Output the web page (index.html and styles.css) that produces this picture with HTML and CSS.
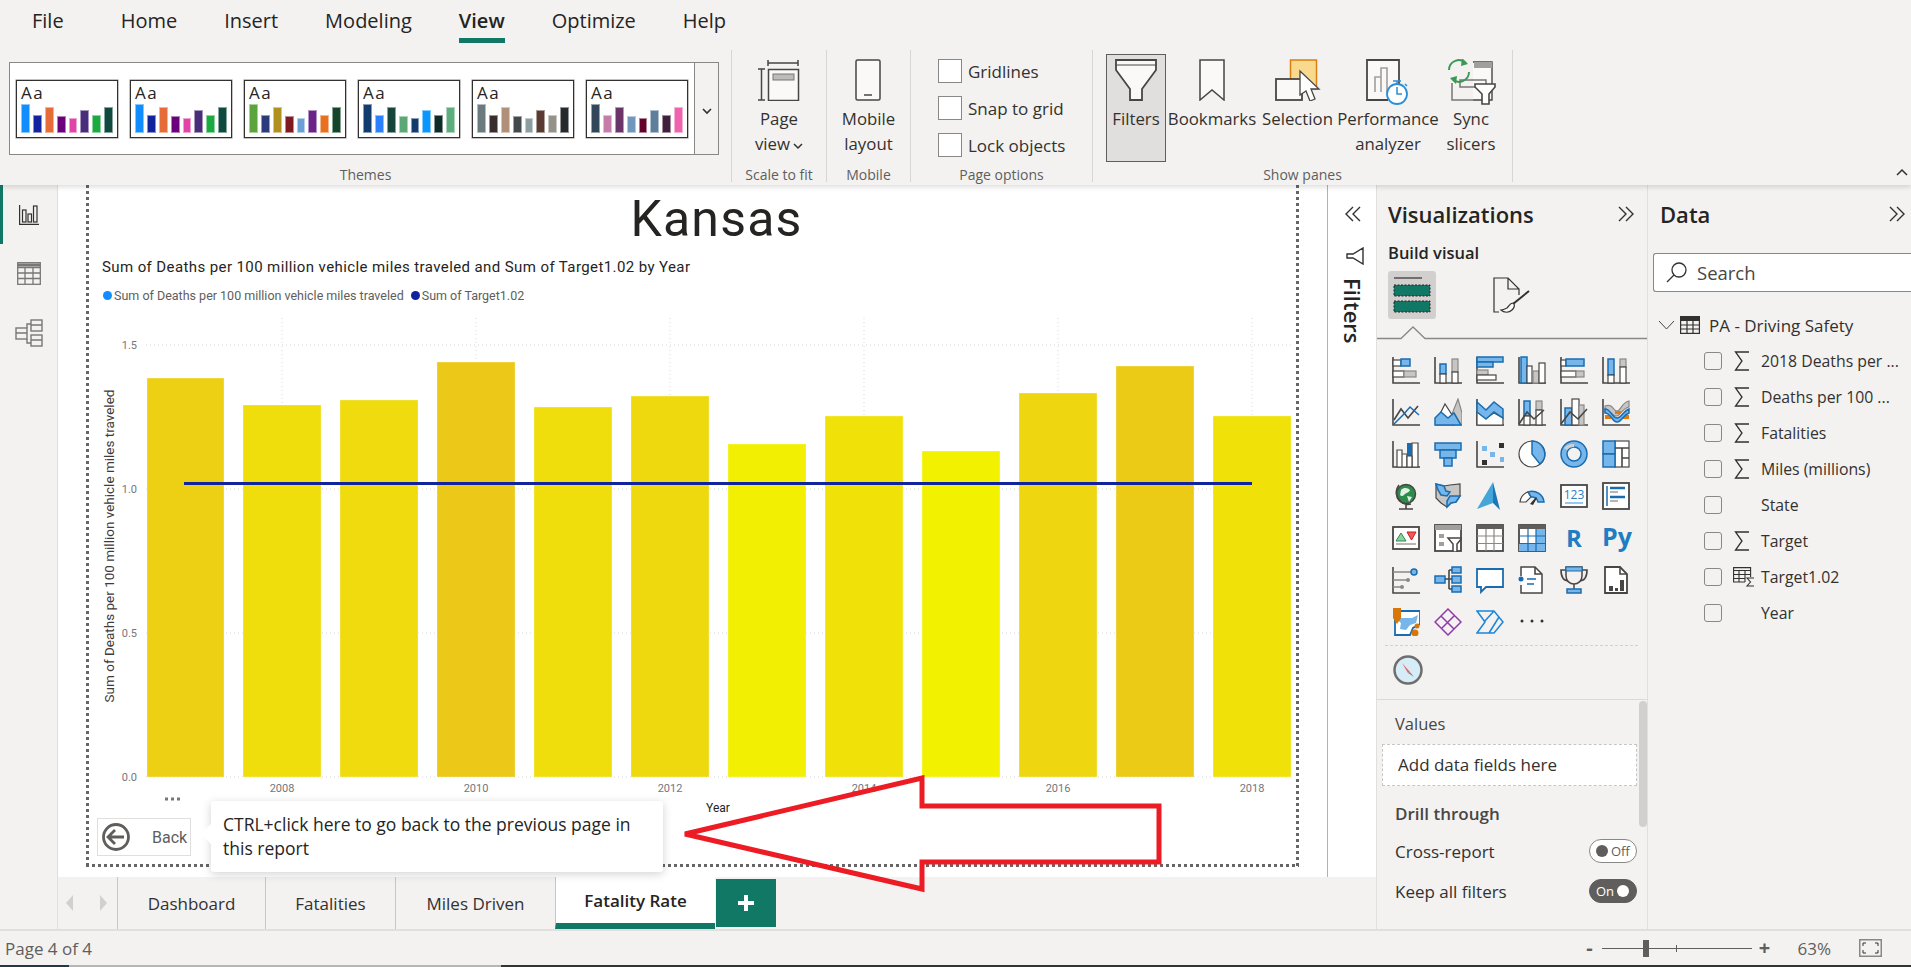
FILE: index.html
```html
<!DOCTYPE html>
<html lang="en">
<head>
    <meta charset="UTF-8">
    <title>Kansas - Power BI Desktop</title>
    <link rel="stylesheet" href="styles.css">
</head>
<body>
<div class="app">

    <!-- ribbon -->
    <header class="ribbon">
        <nav class="menu">
            <span class="menu-file">File</span>
            <span>Home</span>
            <span>Insert</span>
            <span>Modeling</span>
            <span class="menu-on">View</span>
            <span>Optimize</span>
            <span>Help</span>
        </nav>
        <div class="groups">
            <section class="group g-themes">
                <div class="group-body">
                    <div class="gallery">
                        <div class="swatches">
                            <div class="swatch t1"><span>Aa</span><div class="mini"><i></i><i></i><i></i><i></i><i></i><i></i><i></i><i></i></div></div>
                            <div class="swatch t1"><span>Aa</span><div class="mini"><i></i><i></i><i></i><i></i><i></i><i></i><i></i><i></i></div></div>
                            <div class="swatch t3"><span>Aa</span><div class="mini"><i></i><i></i><i></i><i></i><i></i><i></i><i></i><i></i></div></div>
                            <div class="swatch t4"><span>Aa</span><div class="mini"><i></i><i></i><i></i><i></i><i></i><i></i><i></i><i></i></div></div>
                            <div class="swatch t5"><span>Aa</span><div class="mini"><i></i><i></i><i></i><i></i><i></i><i></i><i></i><i></i></div></div>
                            <div class="swatch t6"><span>Aa</span><div class="mini"><i></i><i></i><i></i><i></i><i></i><i></i><i></i><i></i></div></div>
                        </div>
                        <div class="gallery-more">
                            <svg width="10" height="7" viewBox="0 0 10 7"><path d="M1 1l4 4 4-4" fill="none" stroke="#323130" stroke-width="1.600"/></svg>
                        </div>
                    </div>
                </div>
                <div class="group-label">Themes</div>
            </section>

            <section class="group g-scale">
                <div class="group-body center">
                    <div class="big">
                        <svg width="43" height="42" viewBox="0 0 43 42">
                            <path d="M11 1v6M41 1v6M11 4h30M1 10h7M1 41h7M4.500 10v31" fill="none" stroke="#484644" stroke-width="1.500"/>
                            <rect x="11.500" y="10.500" width="30" height="31" fill="#faf9f8" stroke="#484644" stroke-width="1.500"/>
                            <rect x="16" y="15" width="21" height="6" fill="#bebbb8" stroke="#797775"/>
                        </svg>
                        <div class="big-text">Page<br>view<svg class="caret" width="10" height="7" viewBox="0 0 10 7"><path d="M1 1l4 4 4-4" fill="none" stroke="#323130" stroke-width="1.500"/></svg></div>
                    </div>
                </div>
                <div class="group-label">Scale to fit</div>
            </section>

            <section class="group g-mobile">
                <div class="group-body center">
                    <div class="big">
                        <svg width="26" height="42" viewBox="0 0 26 42">
                            <rect x="1" y="1" width="24" height="40" rx="1.500" fill="#faf9f8" stroke="#484644" stroke-width="1.500"/>
                            <path d="M9 36h8" stroke="#484644" stroke-width="1.500"/>
                        </svg>
                        <div class="big-text">Mobile<br>layout</div>
                    </div>
                </div>
                <div class="group-label">Mobile</div>
            </section>

            <section class="group g-options">
                <div class="group-body checks">
                    <label class="check"><i></i>Gridlines</label>
                    <label class="check"><i></i>Snap to grid</label>
                    <label class="check"><i></i>Lock objects</label>
                </div>
                <div class="group-label">Page options</div>
            </section>

            <section class="group g-panes">
                <div class="group-body panes-row">
                    <div class="big big-filters">
                        <svg width="42" height="42" viewBox="0 0 42 42">
                            <path d="M1 1h40v10L27 30v11H15V30L1 11z" fill="#faf9f8" stroke="#484644" stroke-width="1.800"/>
                            <path d="M1 6h40" stroke="#484644" stroke-width="1"/>
                        </svg>
                        <div class="big-text">Filters</div>
                    </div>
                    <div class="big big-bookmarks">
                        <svg width="26" height="42" viewBox="0 0 26 42">
                            <path d="M1 1h24v40L13 31 1 41z" fill="#faf9f8" stroke="#484644" stroke-width="1.500"/>
                        </svg>
                        <div class="big-text">Bookmarks</div>
                    </div>
                    <div class="big big-selection">
                        <svg width="46" height="42" viewBox="0 0 46 42">
                            <rect x="15.500" y="1" width="26" height="29" fill="#f9d98d" stroke="#d9800f" stroke-width="1.500"/>
                            <rect x="1" y="20" width="26" height="21" fill="#faf9f8" stroke="#484644" stroke-width="1.800"/>
                            <path d="M25 12v24l6-4 4 10 5-2-4-10h8z" fill="#fff" stroke="#484644" stroke-width="1.300"/>
                        </svg>
                        <div class="big-text">Selection</div>
                    </div>
                    <div class="big big-perf">
                        <svg width="44" height="46" viewBox="0 0 44 46">
                            <path d="M33 27V1H1v40h21" fill="#faf9f8" stroke="#484644" stroke-width="1.800"/>
                            <path d="M9 33V18h6v15M15 33V9h6v24" fill="none" stroke="#a19f9d" stroke-width="1.600"/>
                            <circle cx="31" cy="35" r="10" fill="#fff" stroke="#2a8fd6" stroke-width="1.800"/>
                            <path d="M31 28v7h5M27 22h8M31 22v3M39 25l2 2" fill="none" stroke="#2a8fd6" stroke-width="1.500"/>
                        </svg>
                        <div class="big-text">Performance<br>analyzer</div>
                    </div>
                    <div class="big big-sync">
                        <svg width="49" height="46" viewBox="0 0 49 46">
                            <path d="M26 3h19v38H26" fill="#faf9f8" stroke="#484644" stroke-width="1.400"/>
                            <rect x="27" y="3" width="18" height="6" fill="#a19f9d"/>
                            <path d="M13 21h26v7H13zM5 24v17h22" fill="none" stroke="#797775" stroke-width="1.500"/>
                            <path d="M28 25h20v3l-6 7v10h-7V35l-7-7z" fill="#fff" stroke="#484644" stroke-width="1.600"/>
                            <path d="M2 11a10 10 0 0 1 17-7M22 13a10 10 0 0 1-17 7" fill="none" stroke="#3a9a55" stroke-width="1.900"/>
                            <path d="M15 -1l6 6-7 2zM9 25l-6-6 7-2z" fill="#3a9a55"/>
                        </svg>
                        <div class="big-text">Sync<br>slicers</div>
                    </div>
                </div>
                <div class="group-label">Show panes</div>
            </section>
        </div>
        <svg class="ribbon-collapse" width="12" height="8" viewBox="0 0 12 8"><path d="M1 7l5-5 5 5" fill="none" stroke="#323130" stroke-width="1.500"/></svg>
    </header>

    <div class="main">
        <!-- left nav -->
        <aside class="side">
            <div class="side-item side-on">
                <svg width="20" height="20" viewBox="0 0 20 20" fill="none" stroke="#323130" stroke-width="1.200"><path d="M.6 0v19.400H20"/><rect x="3.500" y="5" width="3.500" height="12"/><rect x="9" y="9" width="3.500" height="8"/><rect x="14.500" y="1" width="3.500" height="16"/></svg>
            </div>
            <div class="side-item">
                <svg width="24" height="23" viewBox="0 0 24 23" fill="none" stroke="#797775" stroke-width="1.300"><rect x=".7" y=".7" width="22.600" height="21.600"/><path d="M.7 5.500h22.600M.7 11h22.600M.7 16.500h22.600M8 5.500v16.800M16 5.500v16.800"/><path d="M.7 3h22.600" stroke-width="3"/></svg>
            </div>
            <div class="side-item">
                <svg width="28" height="28" viewBox="0 0 28 28" fill="none" stroke="#797775" stroke-width="1.400"><rect x="1" y="9" width="11" height="11"/><rect x="16" y="1" width="11" height="11"/><rect x="16" y="16" width="11" height="11"/><path d="M1 14h11M16 6h11M16 21h11M12 9V5h4M12 20v4h4"/></svg>
            </div>
        </aside>

        <div class="center-col">
            <div class="stage">
                <!-- report page -->
                <div class="canvas">
                    <div class="report">
                        <h1 class="page-title">Kansas</h1>
                        <div class="chart-title">Sum of Deaths per 100 million vehicle miles traveled and Sum of Target1.02 by Year</div>
                        <div class="legend">
                            <i class="dot dot-a"></i><span>Sum of Deaths per 100 million vehicle miles traveled</span>
                            <i class="dot dot-b"></i><span>Sum of Target1.02</span>
                        </div>
                        <svg class="chart" width="1211" height="505" viewBox="0 0 1211 505">
                            <g class="grid">
                                <path d="M60 35H1205M60 179H1205M60 323H1205M60 467H1205"/>
                                <path d="M196 8V467M390 8V467M584 8V467M778 8V467M972 8V467M1166 8V467"/>
                            </g>
                            <g class="ticks">
                                <text x="51" y="39">1.5</text>
                                <text x="51" y="183">1.0</text>
                                <text x="51" y="327">0.5</text>
                                <text x="51" y="471">0.0</text>
                            </g>
                            <g class="bars">
                                <rect x="61" y="68" width="77" height="399" fill="#edd014"/>
                                <rect x="157" y="95" width="78" height="372" fill="#efdd0c"/>
                                <rect x="254" y="90" width="78" height="377" fill="#efdb0e"/>
                                <rect x="351" y="52" width="78" height="415" fill="#ecc918"/>
                                <rect x="448" y="97" width="78" height="370" fill="#efde0c"/>
                                <rect x="545" y="86" width="78" height="381" fill="#eed90f"/>
                                <rect x="642" y="134" width="78" height="333" fill="#f2ef02"/>
                                <rect x="739" y="106" width="78" height="361" fill="#f0e209"/>
                                <rect x="836" y="141" width="78" height="326" fill="#f2f200"/>
                                <rect x="933" y="83" width="78" height="384" fill="#eed710"/>
                                <rect x="1030" y="56" width="78" height="411" fill="#eccb17"/>
                                <rect x="1127" y="106" width="78" height="361" fill="#f0e209"/>
                            </g>
                            <path d="M98 173.500H1166" stroke="#12239e" stroke-width="3"/>
                            <g class="ticks ticks-x">
                                <text x="196" y="482">2008</text>
                                <text x="390" y="482">2010</text>
                                <text x="584" y="482">2012</text>
                                <text x="778" y="482">2014</text>
                                <text x="972" y="482">2016</text>
                                <text x="1166" y="482">2018</text>
                            </g>
                            <text class="axis-x" x="632" y="502">Year</text>
                            <text class="axis-y" transform="translate(28 236) rotate(-90)">Sum of Deaths per 100 million vehicle miles traveled</text>
                            <path d="M79 489h3M85 489h3M91 489h3" stroke="#797775" stroke-width="3"/>
                        </svg>
                        <div class="back">
                            <svg width="28" height="28" viewBox="0 0 28 28" fill="none" stroke="#605e5c" stroke-width="2.800"><circle cx="14" cy="14" r="12.500"/><path d="M22 14H6M13 7l-7 7 7 7"/></svg>
                            <span>Back</span>
                        </div>
                        <div class="tip">CTRL+click here to go back to the previous page in this report</div>
                        <svg class="arrow" width="490" height="125" viewBox="0 0 490 125">
                            <path d="M3 59L240 3V31H477V87H240V114z" fill="none" stroke="#ed1c24" stroke-width="5"/>
                        </svg>
                    </div>
                </div>
                <!-- collapsed filter pane -->
                <div class="filter-strip">
                    <svg width="18" height="16" viewBox="0 0 18 16" fill="none" stroke="#323130" stroke-width="1.400"><path d="M9 1L2 8l7 7M16 1L9 8l7 7"/></svg>
                    <svg class="strip-funnel" width="18" height="18" viewBox="0 0 18 18" fill="none" stroke="#323130" stroke-width="1.400"><path d="M17 1v16L7 11H1V7h6z"/></svg>
                    <div class="strip-text">Filters</div>
                </div>
            </div>
            <!-- page tabs -->
            <div class="tabs">
                <div class="tab-nav">
                    <svg width="8" height="16" viewBox="0 0 8 16"><path d="M7 0v16L0 8z" fill="#d2d0ce"/></svg>
                    <svg width="8" height="16" viewBox="0 0 8 16"><path d="M1 0v16l7-8z" fill="#d2d0ce"/></svg>
                </div>
                <div class="tab tab-a">Dashboard</div>
                <div class="tab tab-b">Fatalities</div>
                <div class="tab tab-c">Miles Driven</div>
                <div class="tab tab-d tab-on">Fatality Rate</div>
                <div class="tab-add">
                    <svg width="18" height="18" viewBox="0 0 18 18"><path d="M9 1v16M1 9h16" stroke="#fff" stroke-width="4"/></svg>
                </div>
            </div>
        </div>

        <!-- visualizations pane -->
        <aside class="pane viz">
            <div class="pane-head">
                <h2>Visualizations</h2>
                <svg width="18" height="16" viewBox="0 0 18 16" fill="none" stroke="#323130" stroke-width="1.400"><path d="M2 1l7 7-7 7M9 1l7 7-7 7"/></svg>
            </div>
            <div class="viz-sub">Build visual</div>
            <div class="viz-tabs">
                <div class="viz-tab-on">
                    <svg width="38" height="38" viewBox="0 0 38 38">
                        <path d="M1 2h28" stroke="#323130" stroke-width="1.200"/>
                        <rect x="1" y="9" width="36" height="11" fill="#117865" stroke="#252423" stroke-dasharray="2 1.500"/>
                        <rect x="1" y="25" width="36" height="11" fill="#117865" stroke="#252423" stroke-dasharray="2 1.500"/>
                    </svg>
                </div>
                <svg class="viz-format" width="37" height="37" viewBox="0 0 37 37" fill="none" stroke="#323130" stroke-width="1.200">
                    <path d="M6 35H1V1h14l11 11v6M15 1v11h11"/>
                    <path d="M36 14L20 27" stroke-width="2"/>
                    <path d="M20 26c-3 0-4 3-6 5-2 1-4 2-6 2 3 3 8 3 11 0 2-2 3-4 2-6z" fill="#faf9f8"/>
                </svg>
            </div>
            <svg class="viz-notch" width="270" height="14" viewBox="0 0 270 14"><path d="M0 12.500H24L36 1l12 11.500H270" fill="none" stroke="#8a8886" stroke-width="1.300"/></svg>

            <div class="viz-grid">
                <svg viewBox="0 0 28 28"><path class="k" d="M1 1V27H28"/><rect class="w" x="1" y="4" width="8" height="6"/><rect class="b" x="9" y="3" width="9" height="7"/><rect class="w" x="1" y="15" width="11" height="6"/><rect class="g" x="12" y="15" width="12" height="6"/></svg>
                <svg viewBox="0 0 28 28"><path class="k" d="M1 1V27H28"/><rect class="b" x="6" y="8" width="6" height="10"/><rect class="w" x="6" y="18" width="6" height="9"/><rect class="g" x="18" y="3" width="6" height="13"/><rect class="w" x="18" y="16" width="6" height="11"/></svg>
                <svg viewBox="0 0 28 28"><path class="k" d="M1 1V27H28"/><rect class="b" x="1" y="1" width="26" height="5"/><rect class="b" x="1" y="6" width="16" height="5"/><rect class="g" x="1" y="14" width="11" height="5"/><rect class="w" x="1" y="19" width="19" height="5"/></svg>
                <svg viewBox="0 0 28 28"><path class="k" d="M1 1V27H28"/><rect class="b" x="3" y="1" width="6" height="26"/><rect class="w" x="9" y="10" width="5" height="17"/><rect class="g" x="15" y="15" width="6" height="12"/><rect class="w" x="21" y="7" width="6" height="20"/></svg>
                <svg viewBox="0 0 28 28"><path class="k" d="M1 1V27H28"/><rect class="w" x="1" y="4" width="5" height="6"/><rect class="b" x="6" y="3" width="18" height="7"/><rect class="w" x="1" y="15" width="15" height="6"/><rect class="g" x="16" y="15" width="8" height="6"/></svg>
                <svg viewBox="0 0 28 28"><path class="k" d="M1 1V27H28"/><rect class="b" x="6" y="3" width="6" height="16"/><rect class="w" x="6" y="19" width="6" height="8"/><rect class="g" x="18" y="3" width="6" height="8"/><rect class="w" x="18" y="11" width="6" height="16"/></svg>

                <svg viewBox="0 0 28 28"><path class="k" d="M1 1V27H28"/><path class="k" d="M2 22L9 11l7 9 10-12"/><path class="s" d="M2 26L11 17l7-8 9 8"/></svg>
                <svg viewBox="0 0 28 28"><path class="g" d="M18 16L24 1l4 14V27H18z"/><path class="w" d="M2 24L11 6l9 14v7H2z"/><path class="b" d="M1 27V20l6-6 7 6 6-5 7 12z"/></svg>
                <svg viewBox="0 0 28 28"><path class="k" d="M1 1V27H28"/><path class="w" d="M1 14l9 6 8-5 9 5v7H1z"/><path class="b" d="M1 4l9 8 8-8 9 7v9l-9-6-8 7-9-7z"/></svg>
                <svg viewBox="0 0 28 28"><path class="k" d="M1 1V27H28"/><rect class="b" x="6" y="3" width="6" height="15"/><rect class="w" x="6" y="18" width="6" height="9"/><rect class="g" x="18" y="3" width="6" height="9"/><rect class="w" x="18" y="12" width="6" height="15"/><path class="k" d="M1 26L9 14l7 7 10-9"/></svg>
                <svg viewBox="0 0 28 28"><path class="k" d="M1 1V27H28"/><rect class="b" x="5" y="10" width="7" height="17"/><rect class="w" x="12" y="1" width="7" height="26"/><rect class="g" x="19" y="7" width="5" height="20"/><path class="k" d="M1 26L10 14l8 7 9-10"/></svg>
                <svg viewBox="0 0 28 28"><path class="k" d="M1 1V27H28"/><path class="g" d="M3 8c8-3 8 5 12 5s4-8 12-10v6c-8 2-8 9-13 9S9 12 3 14z"/><rect x="3" y="17" width="6" height="4" fill="#e07b10"/><rect x="13" y="13" width="6" height="3" fill="#e07b10"/><rect x="21" y="17" width="6" height="4" fill="#e07b10"/><path class="b" d="M3 11c6 0 7 9 12 9s6-7 12-9v4c-6 2-7 9-12 9S9 15 3 15z"/></svg>

                <svg viewBox="0 0 28 28"><path class="k" d="M1 1V27H28"/><path class="w" d="M5 27V10h5v17zM10 27V14h5v13zM20 27V3h6v24z"/><rect x="15" y="3" width="5" height="13" fill="#1a6cb0"/><path class="w" d="M15 16h5v11h-5z"/></svg>
                <svg viewBox="0 0 28 28"><rect class="b" x="1" y="3" width="26" height="7"/><rect class="b" x="6" y="10" width="16" height="8"/><rect class="b" x="10" y="18" width="8" height="8"/></svg>
                <svg viewBox="0 0 28 28"><path class="k" d="M1 1V27H28"/><rect x="6" y="6" width="5" height="5" fill="#76b6ea"/><rect x="23" y="3" width="5" height="5" fill="#323130"/><rect x="14" y="12" width="5" height="5" fill="#76b6ea"/><rect x="24" y="17" width="5" height="5" fill="#76b6ea"/><rect x="6" y="20" width="5" height="5" fill="#323130"/></svg>
                <svg viewBox="0 0 28 28"><circle class="w" cx="14" cy="14" r="13"/><path class="b" d="M14 14V1a13 13 0 0 1 8 23z"/></svg>
                <svg viewBox="0 0 28 28"><circle cx="14" cy="14" r="10" fill="none" stroke="#76b6ea" stroke-width="6"/><circle cx="14" cy="14" r="13" class="k2"/><circle cx="14" cy="14" r="7" class="k2"/><path d="M4 8a12 12 0 0 1 10-4v3a8 8 0 0 0-7 3z" fill="#d2d0ce"/></svg>
                <svg viewBox="0 0 28 28"><rect class="w" x="13" y="1" width="14" height="26"/><rect class="b" x="1" y="1" width="12" height="13"/><rect class="b" x="1" y="14" width="12" height="13"/><path class="k" d="M13 8h14M20 8v19M20 18h7"/></svg>

                <svg viewBox="0 0 28 28"><circle cx="14" cy="12" r="9.500" fill="#2e8b4a" stroke="#484644" stroke-width="1.500"/><path d="M9 8c3-3 7-2 9 0-1 3-3 2-5 4s-3 3-5 1zM15 14l5 1-3 5z" fill="#dff0e4"/><path class="k" d="M7 3a12 12 0 0 0 12 19M7 27h14M14 23v4"/></svg>
                <svg viewBox="0 0 28 28"><path d="M2 2l8 2 6-1 10-1v12l-4 6-5 1-4 4-6-4-5-5z" fill="#c8c6c4" stroke="#484644" stroke-width="1.200"/><path class="b" d="M2 2l8 2 2 5 4 1-3 4-6-1-3-5zM16 14h10l-4 6-5 1-4 4v-6z"/></svg>
                <svg viewBox="0 0 28 28"><path d="M17 0L1 27l16-6z" fill="#45a5d8"/><path d="M17 0v21l7 7z" fill="#1b78b8"/></svg>
                <svg viewBox="0 0 28 28"><path d="M2 20a12 12 0 0 1 8-10l3 5-5 5z" fill="#fff" stroke="#484644" stroke-width="1.200"/><path class="b" d="M10 10a12 12 0 0 1 16 10h-6a6 6 0 0 0-7-5z"/><path d="M12 22l6-7 1 1-4 7z" fill="#323130"/></svg>
                <svg viewBox="0 0 28 28"><rect x="1" y="3" width="26" height="22" fill="#fff" stroke="#484644" stroke-width="1.800"/><text class="card-num" x="14" y="17">123</text><path d="M5 21h18" stroke="#76b6ea" stroke-width="1.500"/></svg>
                <svg viewBox="0 0 28 28"><rect x="1" y="1" width="26" height="26" fill="#fff" stroke="#484644" stroke-width="1.800"/><path d="M5 4v20" stroke="#1a6cb0" stroke-width="1.500"/><path d="M8 6h15M8 15h15" stroke="#1a6cb0" stroke-width="2.500"/><path d="M8 10h8M8 19h8" stroke="#a19f9d" stroke-width="1.500"/></svg>

                <svg viewBox="0 0 28 28"><rect x="1" y="3" width="26" height="22" fill="#fff" stroke="#484644" stroke-width="1.800"/><path d="M9 9l5 8H4z" fill="#8fd0a0" stroke="#2e8b4a"/><path d="M15 8h9l-4.500 8z" fill="#ef5a5a" stroke="#c81e1e"/><path d="M4 20h20" stroke="#a19f9d" stroke-width="1.500"/></svg>
                <svg viewBox="0 0 28 28"><rect x="1" y="1" width="26" height="26" fill="#fff" stroke="#484644" stroke-width="1.800"/><rect x="1" y="1" width="26" height="5" fill="#a19f9d"/><rect x="5" y="10" width="5" height="4" fill="#a19f9d"/><rect x="5" y="18" width="5" height="4" fill="#a19f9d"/><path d="M14 14h14l-5 6v8h-4v-8z" fill="#fff" stroke="#484644" stroke-width="1.500"/></svg>
                <svg viewBox="0 0 28 28"><rect x="1" y="1" width="26" height="26" fill="#fff" stroke="#484644" stroke-width="1.800"/><rect x="1" y="1" width="26" height="4" fill="#605e5c"/><path d="M1 12h26M1 19.500h26M10 5v22M18 5v22" stroke="#8a8886" stroke-width="1.200"/></svg>
                <svg viewBox="0 0 28 28"><rect x="1" y="1" width="26" height="26" fill="#fff" stroke="#484644" stroke-width="1.800"/><rect x="1" y="1" width="26" height="4" fill="#605e5c"/><path d="M18 5h9v22h-9zM1 19h26v8H1z" fill="#76b6ea"/><path d="M1 12h26M1 19.500h26M10 5v22M18 5v22" stroke="#1a6cb0" stroke-width="1.200"/></svg>
                <span class="vi-r">R</span>
                <span class="vi-py">Py</span>

                <svg viewBox="0 0 28 28"><path class="k" d="M1 1V27H28"/><path d="M1 6h18M1 14h14M1 21h8" stroke="#8a8886" stroke-width="1.300"/><circle class="b" cx="22" cy="6" r="3"/><circle cx="16" cy="14" r="2" fill="#8a8886"/><circle cx="10" cy="21" r="2" fill="#8a8886"/></svg>
                <svg viewBox="0 0 28 28"><rect class="b" x="1" y="10" width="10" height="7"/><rect class="b" x="18" y="1" width="9" height="6"/><rect class="b" x="18" y="10" width="9" height="7"/><rect class="b" x="18" y="20" width="9" height="6"/><path class="k" d="M11 13h7M15 4v19M15 4h3M15 23h3"/></svg>
                <svg viewBox="0 0 28 28"><path d="M1 3h26v18H10l-5 5v-5H1z" fill="#fff" stroke="#1a6cb0" stroke-width="1.800"/></svg>
                <svg viewBox="0 0 28 28"><path d="M3 10V1h14l7 7v19H3v-8" fill="#fff" stroke="#484644" stroke-width="1.500"/><path class="k" d="M17 1v7h7"/><circle cx="3" cy="13" r="2.500" fill="#1a6cb0"/><path d="M9 13h9M9 18h7" stroke="#1a6cb0" stroke-width="1.500"/></svg>
                <svg viewBox="0 0 28 28"><path class="k" d="M6 4H1c0 7 3 11 8 11M22 4h5c0 7-3 11-8 11"/><path d="M6 1h16v9c0 5-4 8-8 8s-8-3-8-8z" fill="#f3f2f1" stroke="#484644" stroke-width="1.500"/><rect x="6" y="1" width="16" height="4" fill="#76b6ea" stroke="#1a6cb0"/><path d="M14 18v5" stroke="#484644" stroke-width="1.500"/><rect class="b" x="7" y="23" width="14" height="4"/></svg>
                <svg viewBox="0 0 28 28"><path d="M3 1h15l7 7v19H3z" fill="#fff" stroke="#484644" stroke-width="1.800"/><path class="k" d="M18 1v7h7"/><rect x="7" y="20" width="4" height="5" fill="#484644"/><rect x="13" y="22" width="3" height="3" fill="#484644"/><rect x="18" y="14" width="4" height="11" fill="#484644"/></svg>

                <svg viewBox="0 0 28 28"><path d="M3 3h25v13l-7 4-3 7H3z" fill="#fff" stroke="#1a6cb0" stroke-width="1.800"/><path d="M3 10l6 5-1 6 6 1 4-5 6-2 2-8-6 3z" fill="#76b6ea"/><path d="M1 0h8v10l-4 6-4-6z" fill="#d97706"/><circle cx="25" cy="18" r="2.500" fill="#d97706"/><circle cx="23" cy="25" r="3.500" fill="#d97706"/></svg>
                <svg viewBox="0 0 28 28" fill="none" stroke="#8e3aa8" stroke-width="1.500"><path d="M14 1l13 13-13 13L1 14zM14 1l-7 7 13 13M21 7L8 20M14 14l-7 7"/></svg>
                <svg viewBox="0 0 28 28" fill="none" stroke="#1b86d9" stroke-width="1.500"><path d="M1 3h17l9 11-9 11H1l8-11zM1 3l8 11M18 3L8 14M23 9L13 25"/></svg>
                <svg viewBox="0 0 28 28"><circle cx="4" cy="13" r="1.500" fill="#323130"/><circle cx="14" cy="13" r="1.500" fill="#323130"/><circle cx="24" cy="13" r="1.500" fill="#323130"/></svg>
            </div>

            <div class="viz-dotted"></div>
            <svg class="viz-compass" width="30" height="30" viewBox="0 0 30 30">
                <circle cx="15" cy="15" r="13.500" fill="#d6ecf7" stroke="#6e6e6e" stroke-width="2.500"/>
                <path d="M9 8l8 9-2 1z" fill="#e06565"/>
                <path d="M17 17l4 5-6-4z" fill="#8a8886"/>
            </svg>
            <div class="viz-rule"></div>

            <div class="well-label">Values</div>
            <div class="well">Add data fields here</div>
            <div class="drill-head">Drill through</div>
            <div class="drill-row drill-first">
                <span>Cross-report</span>
                <div class="toggle"><i></i><span>Off</span></div>
            </div>
            <div class="drill-row drill-second">
                <span>Keep all filters</span>
                <div class="toggle toggle-on"><span>On</span><i></i></div>
            </div>
            <div class="viz-scroll"></div>
        </aside>

        <!-- data pane -->
        <aside class="pane data">
            <div class="pane-head">
                <h2>Data</h2>
                <svg width="18" height="16" viewBox="0 0 18 16" fill="none" stroke="#323130" stroke-width="1.400"><path d="M2 1l7 7-7 7M9 1l7 7-7 7"/></svg>
            </div>
            <div class="search">
                <svg width="21" height="21" viewBox="0 0 21 21" fill="none" stroke="#323130" stroke-width="1.300"><circle cx="13" cy="8" r="7"/><path d="M8 13l-7 7"/></svg>
                <span>Search</span>
            </div>
            <div class="tree-head">
                <svg width="17" height="10" viewBox="0 0 17 10" fill="none" stroke="#484644" stroke-width="1"><path d="M1 1l7.500 8L16 1"/></svg>
                <svg width="20" height="18" viewBox="0 0 20 18" fill="none" stroke="#323130" stroke-width="1.200"><rect x=".6" y=".6" width="18.800" height="16.800"/><path d="M.6 4.500h18.800M.6 9h18.800M.6 13h18.800M7 4.500v13M13 4.500v13"/><path d="M.6 2.500h18.800" stroke-width="3"/></svg>
                <span>PA - Driving Safety</span>
            </div>
            <div class="field"><i class="box"></i><svg class="sigma" width="16" height="20" viewBox="0 0 16 20"><path d="M15 1H1.500L8 10l-6.500 9H15"/></svg><span>2018 Deaths per ...</span></div>
            <div class="field"><i class="box"></i><svg class="sigma" width="16" height="20" viewBox="0 0 16 20"><path d="M15 1H1.500L8 10l-6.500 9H15"/></svg><span>Deaths per 100 ...</span></div>
            <div class="field"><i class="box"></i><svg class="sigma" width="16" height="20" viewBox="0 0 16 20"><path d="M15 1H1.500L8 10l-6.500 9H15"/></svg><span>Fatalities</span></div>
            <div class="field"><i class="box"></i><svg class="sigma" width="16" height="20" viewBox="0 0 16 20"><path d="M15 1H1.500L8 10l-6.500 9H15"/></svg><span>Miles (millions)</span></div>
            <div class="field"><i class="box"></i><i class="no-icon"></i><span>State</span></div>
            <div class="field"><i class="box"></i><svg class="sigma" width="16" height="20" viewBox="0 0 16 20"><path d="M15 1H1.500L8 10l-6.500 9H15"/></svg><span>Target</span></div>
            <div class="field"><i class="box"></i><svg class="sigma-table" width="22" height="20" viewBox="0 0 22 20" fill="none" stroke="#323130" stroke-width="1.100"><path d="M12 15H.6V.6h17V10M.6 3.500h17M.6 7.500h17M.6 11.500h11M6 3.500V15M12 3.500V15"/><path d="M21 11h-7l3.500 4-3.500 4h7"/></svg><span>Target1.02</span></div>
            <div class="field"><i class="box"></i><i class="no-icon"></i><span>Year</span></div>
        </aside>
    </div>

    <footer class="status">
        <span>Page 4 of 4</span>
        <div class="zoom">
            <b class="zoom-sign">-</b>
            <div class="slider"><i class="slider-thumb"></i><i class="slider-mark"></i></div>
            <b class="zoom-sign">+</b>
            <span class="zoom-val">63%</span>
            <svg width="23" height="18" viewBox="0 0 23 18" fill="none"><rect x=".75" y=".75" width="21.500" height="16.500" stroke="#8a8886" stroke-width="1.500"/><path d="M7 4H4v3M16 4h3v3M7 14H4v-3M16 14h3v-3" stroke="#323130"/></svg>
        </div>
    </footer>
    <div class="taskbar"><i></i><i></i><i></i></div>
</div>
</body>
</html>
```

FILE: styles.css
```css
* {
    box-sizing: border-box;
}
body {
    margin: 0;
    font-family: "Open Sans", sans-serif;
    color: #323130;
    background-color: #f3f2f1;
}
svg {
    display: block;
    flex: none;
}
.app {
    width: 1911px;
    height: 967px;
    display: flex;
    flex-direction: column;
    overflow: hidden;
}

/* ribbon */
.ribbon {
    position: relative;
    z-index: 3;
    height: 185px;
    flex: none;
    background-color: #f3f2f1;
    box-shadow: 0 2px 5px rgba(0, 0, 0, 0.14);
}
.menu {
    height: 50px;
    display: flex;
    align-items: flex-start;
    gap: 47px;
    padding: 8px 0 0 32px;
    font-size: 20px;
    line-height: 26px;
    color: #252423;
}
.menu-file {
    margin-right: 10px;
}
.menu-on {
    font-weight: 600;
    height: 35px;
    border-bottom: 5px solid #117865;
}
.groups {
    display: flex;
    height: 135px;
}
.group {
    height: 132px;
    display: flex;
    flex-direction: column;
    border-right: 1px solid #d8d6d4;
}
.group-body {
    height: 115px;
    flex: none;
}
.group-label {
    height: 17px;
    padding-top: 3px;
    line-height: 14px;
    font-size: 14px;
    text-align: center;
    color: #605e5c;
}
.g-themes { width: 732px; }
.g-scale { width: 95px; }
.g-mobile { width: 84px; }
.g-options { width: 182px; }
.g-panes { width: 420px; }
.center {
    display: flex;
    justify-content: center;
}
.gallery {
    width: 710px;
    height: 93px;
    margin: 12px 0 0 9px;
    display: flex;
    background-color: #fff;
    border: 1px solid #8a8886;
}
.swatches {
    flex: 1;
    display: flex;
    align-items: center;
    gap: 12px;
    padding-left: 6px;
}
.swatch {
    width: 102px;
    height: 58px;
    padding: 1px 4px;
    border: 1px solid #323130;
    box-shadow: 0 0 0 0.5px #8a8886;
    background-color: #fff;
}
.swatch span {
    display: block;
    height: 21px;
    font-size: 17px;
    line-height: 21px;
    letter-spacing: 1.500px;
    color: #252423;
}
.mini {
    display: flex;
    align-items: flex-end;
    gap: 3px;
    height: 30px;
}
.mini i {
    width: 9px;
    border: 1px solid rgba(255, 255, 255, 0.5);
}
.mini i:nth-child(1) { height: 29px; }
.mini i:nth-child(2) { height: 18px; }
.mini i:nth-child(3) { height: 26px; }
.mini i:nth-child(4) { height: 17px; }
.mini i:nth-child(5) { height: 15px; }
.mini i:nth-child(6) { height: 23px; }
.mini i:nth-child(7) { height: 18px; }
.mini i:nth-child(8) { height: 26px; }
.t1 i:nth-child(1) { background-color: #118dff; }
.t1 i:nth-child(2) { background-color: #12239e; }
.t1 i:nth-child(3) { background-color: #e66c37; }
.t1 i:nth-child(4) { background-color: #6b007b; }
.t1 i:nth-child(5) { background-color: #e044a7; }
.t1 i:nth-child(6) { background-color: #4a2d7a; }
.t1 i:nth-child(7) { background-color: #1aab40; }
.t1 i:nth-child(8) { background-color: #0f4a3f; }
.t3 i:nth-child(1) { background-color: #5ba33b; }
.t3 i:nth-child(2) { background-color: #2b3a7a; }
.t3 i:nth-child(3) { background-color: #b0901f; }
.t3 i:nth-child(4) { background-color: #7f1a20; }
.t3 i:nth-child(5) { background-color: #6a9fd8; }
.t3 i:nth-child(6) { background-color: #6a2388; }
.t3 i:nth-child(7) { background-color: #e8701e; }
.t3 i:nth-child(8) { background-color: #14452a; }
.t4 i:nth-child(1) { background-color: #123b6e; }
.t4 i:nth-child(2) { background-color: #2a80ff; }
.t4 i:nth-child(3) { background-color: #17453c; }
.t4 i:nth-child(4) { background-color: #5aa877; }
.t4 i:nth-child(5) { background-color: #123b6e; }
.t4 i:nth-child(6) { background-color: #0a96ff; }
.t4 i:nth-child(7) { background-color: #0f2b28; }
.t4 i:nth-child(8) { background-color: #5ead7e; }
.t5 i:nth-child(1) { background-color: #6a7a7d; }
.t5 i:nth-child(2) { background-color: #3a2d2d; }
.t5 i:nth-child(3) { background-color: #b09078; }
.t5 i:nth-child(4) { background-color: #444a4c; }
.t5 i:nth-child(5) { background-color: #8c9ea0; }
.t5 i:nth-child(6) { background-color: #5a3a32; }
.t5 i:nth-child(7) { background-color: #95928a; }
.t5 i:nth-child(8) { background-color: #262a2c; }
.t6 i:nth-child(1) { background-color: #33475b; }
.t6 i:nth-child(2) { background-color: #c67ca8; }
.t6 i:nth-child(3) { background-color: #6a3468; }
.t6 i:nth-child(4) { background-color: #7198bc; }
.t6 i:nth-child(5) { background-color: #64022a; }
.t6 i:nth-child(6) { background-color: #5e7f9c; }
.t6 i:nth-child(7) { background-color: #41203e; }
.t6 i:nth-child(8) { background-color: #ef63ac; }
.gallery-more {
    width: 24px;
    display: flex;
    align-items: center;
    justify-content: center;
    background-color: #f3f2f1;
    border-left: 1px solid #8a8886;
    padding-top: 6px;
}
.big {
    display: flex;
    flex-direction: column;
    align-items: center;
    padding-top: 9px;
}
.big-text {
    margin-top: 6px;
    font-size: 16.800px;
    line-height: 24.500px;
    text-align: center;
    white-space: nowrap;
}
.caret {
    display: inline-block;
    margin-left: 3px;
}
.checks {
    display: flex;
    flex-direction: column;
    gap: 13px;
    padding: 9px 0 0 27px;
}
.check {
    display: flex;
    align-items: center;
    height: 24px;
    gap: 6px;
    font-size: 17px;
}
.check i {
    width: 24px;
    height: 24px;
    background-color: #fff;
    border: 1px solid #8a8886;
}
.panes-row {
    display: flex;
    padding-left: 13px;
}
.big-filters {
    width: 60px;
    height: 108px;
    margin-top: 4px;
    padding-top: 4px;
    background-color: #e1dfdd;
    border: 1px solid #605e5c;
}
.big-bookmarks { width: 92px; }
.big-selection { width: 79px; }
.big-perf { width: 102px; }
.big-sync { width: 64px; }
.big-perf > svg,
.big-sync > svg {
    margin-bottom: -4px;
}
.ribbon-collapse {
    position: absolute;
    right: 3px;
    bottom: 9px;
}

/* main area */
.main {
    flex: 1;
    display: flex;
    min-height: 0;
}
.side {
    width: 58px;
    flex: none;
    display: flex;
    flex-direction: column;
    border-right: 1px solid #e1dfdd;
}
.side-item {
    height: 59px;
    display: flex;
    align-items: center;
    justify-content: center;
}
.side-on {
    border-left: 3px solid #117865;
    padding-right: 3px;
}
.center-col {
    width: 1318px;
    flex: none;
    display: flex;
    flex-direction: column;
}
.stage {
    height: 692px;
    display: flex;
    background-color: #fff;
}
.canvas {
    flex: 1;
    padding-left: 28px;
}
.report {
    position: relative;
    width: 1213px;
    height: 682px;
    padding: 0 3px 3px;
    background:
        repeating-linear-gradient(#666 0 3px, transparent 3px 6px) left top / 3px 100% no-repeat,
        repeating-linear-gradient(#666 0 3px, transparent 3px 6px) right top / 3px 100% no-repeat,
        repeating-linear-gradient(90deg, #666 0 3px, transparent 3px 6px) left bottom / 100% 3px no-repeat;
}
.page-title {
    height: 68px;
    margin: 0;
    padding-left: 48px;
    font-family: "Roboto", sans-serif;
    font-size: 50px;
    font-weight: 400;
    line-height: 68px;
    letter-spacing: 1.200px;
    text-align: center;
    color: #252423;
}
.chart-title {
    margin: 4px 0 0 13px;
    height: 20px;
    font-family: "Roboto", sans-serif;
    font-size: 15px;
    line-height: 20px;
    letter-spacing: 0.400px;
    color: #252423;
}
.legend {
    display: flex;
    align-items: center;
    height: 16px;
    margin: 10px 0 0 14px;
    font-family: "Roboto", sans-serif;
    font-size: 12.500px;
    color: #605e5c;
}
.dot {
    width: 9px;
    height: 9px;
    margin-right: 2px;
    border-radius: 50%;
}
.dot-a { background-color: #118dff; }
.dot-b {
    margin-left: 7px;
    background-color: #12239e;
}
.chart {
    margin: 7px 0 0 -3px;
    font-family: "Roboto", sans-serif;
}
.grid path {
    fill: none;
    stroke: #d9d9d9;
    stroke-dasharray: 1 3;
}
.bars rect {
    stroke: rgba(255, 255, 255, 0.3);
}
.ticks text {
    font-size: 11px;
    fill: #77757a;
    text-anchor: end;
}
.ticks-x text {
    text-anchor: middle;
}
.axis-x {
    font-size: 12px;
    fill: #252423;
    text-anchor: middle;
}
.axis-y {
    font-size: 13.500px;
    fill: #3f3a38;
    text-anchor: middle;
}
.back {
    width: 94px;
    height: 38px;
    margin: 3px 0 0 8px;
    display: flex;
    align-items: center;
    padding-left: 4px;
    gap: 22px;
    border: 1px solid #e1dfdd;
    font-family: "Roboto", sans-serif;
    font-size: 16px;
    color: #605e5c;
}
.tip {
    position: absolute;
    z-index: 2;
    left: 125px;
    top: 616px;
    width: 452px;
    height: 71px;
    padding: 11px 12px;
    background-color: #fff;
    border-radius: 3px;
    box-shadow: 0 2px 10px rgba(0, 0, 0, 0.18);
    font-size: 17.500px;
    line-height: 24px;
    color: #252423;
}
.tip::before {
    content: "";
    position: absolute;
    left: -7px;
    top: 26px;
    width: 14px;
    height: 14px;
    background-color: #fff;
    transform: rotate(45deg);
}
.arrow {
    position: absolute;
    z-index: 2;
    left: 596px;
    top: 590px;
}
.filter-strip {
    width: 49px;
    flex: none;
    display: flex;
    flex-direction: column;
    align-items: center;
    padding: 21px 0 0 1px;
    border-left: 1px solid #b3b0ad;
}
.strip-funnel {
    margin: 25px 0 0 4px;
}
.strip-text {
    margin-top: 13px;
    writing-mode: vertical-rl;
    font-size: 22px;
    font-weight: 600;
    line-height: 22px;
    color: #252423;
}

/* page tabs */
.tabs {
    flex: 1;
    display: flex;
    align-items: flex-start;
    background-color: #f3f2f1;
    font-size: 17px;
    color: #323130;
}
.tab-nav {
    width: 59px;
    height: 52px;
    display: flex;
    align-items: center;
    justify-content: space-between;
    padding: 0 10px 0 8px;
}
.tab {
    height: 52px;
    display: flex;
    align-items: center;
    justify-content: center;
    border-left: 1px solid #c8c6c4;
}
.tab-a { width: 148px; }
.tab-b { width: 130px; }
.tab-c { width: 160px; }
.tab-d { width: 160px; }
.tab-on {
    padding-top: 1px;
    background-color: #fff;
    font-weight: 600;
    border-bottom: 6px solid #117865;
    color: #252423;
}
.tab-add {
    width: 60px;
    height: 48px;
    margin: 2px 0 0 1px;
    display: flex;
    align-items: center;
    justify-content: center;
    background-color: #117865;
}

/* side panes */
.pane {
    position: relative;
    flex: none;
    border-left: 1px solid #e1dfdd;
}
.viz { width: 271px; }
.data { width: 264px; }
.pane-head {
    display: flex;
    align-items: center;
    justify-content: space-between;
    height: 28px;
    margin-top: 15px;
}
.pane-head h2 {
    margin: 0;
    font-size: 22px;
    font-weight: 600;
    color: #252423;
}
.viz .pane-head { padding: 0 12px 0 11px; }
.data .pane-head { padding: 0 5px 0 12px; }
.viz-sub {
    height: 20px;
    margin: 15px 0 0 11px;
    font-size: 16.500px;
    font-weight: 600;
    line-height: 20px;
    color: #252423;
}
.viz-tabs {
    display: flex;
    align-items: center;
    height: 48px;
    margin: 8px 0 0 11px;
}
.viz-tab-on {
    width: 48px;
    height: 48px;
    display: flex;
    align-items: center;
    justify-content: center;
    background-color: #d2d0ce;
    border-radius: 3px;
}
.viz-format {
    margin-left: 57px;
}
.viz-notch {
    margin-top: 7px;
}
.viz-grid {
    display: grid;
    grid-template-columns: repeat(6, 28px);
    grid-auto-rows: 28px;
    gap: 14px;
    margin: 16px 0 0 15px;
}
.viz-grid svg {
    width: 28px;
    height: 28px;
}
.viz-grid .k { fill: none; stroke: #484644; stroke-width: 1.600; }
.viz-grid .k2 { fill: none; stroke: #1a6cb0; stroke-width: 1.500; }
.viz-grid .s { fill: none; stroke: #1a6cb0; stroke-width: 1.500; }
.viz-grid .b { fill: #76b6ea; stroke: #1a6cb0; stroke-width: 1.500; }
.viz-grid .w { fill: #fff; stroke: #484644; stroke-width: 1.200; }
.viz-grid .g { fill: #c8c6c4; stroke: #8a8886; stroke-width: 1.200; }
.card-num {
    font-size: 12px;
    fill: #2a80c8;
    text-anchor: middle;
}
.vi-r,
.vi-py {
    font-weight: 700;
    color: #1f7ec2;
    line-height: 28px;
    text-align: center;
}
.vi-r { font-size: 24px; }
.vi-py { font-size: 25px; line-height: 24px; }
.viz-dotted {
    margin: 9px 9px 0 8px;
    border-top: 1px dashed #d2d0ce;
}
.viz-compass {
    margin: 9px 0 0 16px;
}
.viz-rule {
    margin-top: 14px;
    border-top: 1px solid #dcdad8;
}
.well-label {
    height: 22px;
    margin: 13px 0 0 18px;
    font-size: 16.500px;
    line-height: 22px;
    color: #484644;
}
.well {
    width: 255px;
    height: 42px;
    margin: 9px 0 0 5px;
    padding-left: 15px;
    background-color: #fff;
    border: 1px dashed #c8c6c4;
    font-size: 17px;
    line-height: 40px;
}
.drill-head {
    height: 22px;
    margin: 17px 0 0 18px;
    font-size: 17px;
    font-weight: 600;
    line-height: 22px;
    color: #484644;
}
.drill-row {
    display: flex;
    align-items: center;
    justify-content: space-between;
    height: 24px;
    padding: 0 10px 0 18px;
    font-size: 17px;
}
.drill-first { margin-top: 14px; }
.drill-second { margin-top: 16px; }
.toggle {
    width: 48px;
    height: 24px;
    display: flex;
    align-items: center;
    gap: 3px;
    padding: 0 3px 0 6px;
    border: 1px solid #8a8886;
    border-radius: 12px;
    background-color: #fff;
    font-size: 13px;
    color: #605e5c;
}
.toggle i {
    width: 12px;
    height: 12px;
    flex: none;
    border-radius: 50%;
    background-color: #605e5c;
}
.toggle-on {
    background-color: #605e5c;
    border-color: #605e5c;
    color: #fff;
    padding: 0 4px 0 6px;
}
.toggle-on i {
    background-color: #fff;
}
.viz-scroll {
    position: absolute;
    right: 0;
    top: 516px;
    width: 8px;
    height: 126px;
    border-radius: 4px;
    background-color: #d2d0ce;
}
.search {
    display: flex;
    align-items: center;
    gap: 10px;
    height: 39px;
    margin: 25px 0 0 5px;
    padding-left: 12px;
    background-color: #fff;
    border: 1px solid #8a8886;
    border-right: 0;
    border-radius: 3px 0 0 3px;
    font-size: 18.500px;
    color: #484644;
}
.tree-head {
    display: flex;
    align-items: center;
    height: 36px;
    margin-top: 15px;
    padding-left: 10px;
    font-size: 17px;
    white-space: nowrap;
}
.tree-head svg:first-child {
    margin-right: 5px;
}
.tree-head span {
    margin-left: 9px;
}
.field {
    display: flex;
    align-items: center;
    height: 36px;
    padding-left: 56px;
    font-size: 15.800px;
    white-space: nowrap;
}
.box {
    width: 18px;
    height: 18px;
    flex: none;
    border: 1px solid #8a8886;
    border-radius: 3px;
}
.sigma {
    margin: 0 11px 0 12px;
}
.sigma path {
    fill: none;
    stroke: #323130;
    stroke-width: 1.300;
}
.sigma-table {
    margin: 0 6px 0 11px;
}
.no-icon {
    width: 39px;
    flex: none;
}

/* status bar */
.status {
    height: 36px;
    flex: none;
    display: flex;
    align-items: center;
    justify-content: space-between;
    padding-left: 5px;
    border-top: 2px solid #e1dfdd;
    font-size: 17px;
    color: #605e5c;
}
.zoom {
    display: flex;
    align-items: center;
    padding-right: 29px;
}
.zoom-sign {
    width: 14px;
    text-align: center;
    font-size: 20px;
    line-height: 20px;
}
.zoom-sign:first-child {
    margin-right: 3px;
}
.slider {
    position: relative;
    width: 150px;
    height: 1px;
    margin: 0 6px 0 2px;
    background-color: #605e5c;
}
.slider-thumb {
    position: absolute;
    left: 41px;
    top: -8px;
    width: 6px;
    height: 17px;
    background-color: #605e5c;
}
.slider-mark {
    position: absolute;
    left: 74px;
    top: -3px;
    width: 1px;
    height: 7px;
    background-color: #605e5c;
}
.zoom-val {
    margin: 0 28px 0 26px;
}
.taskbar {
    height: 2px;
    flex: none;
    display: flex;
}
.taskbar i:nth-child(1) { width: 69px; background-color: #1f3a44; }
.taskbar i:nth-child(2) { width: 432px; background-color: #b5b5b5; }
.taskbar i:nth-child(3) { flex: 1; background-color: #333; }
```
